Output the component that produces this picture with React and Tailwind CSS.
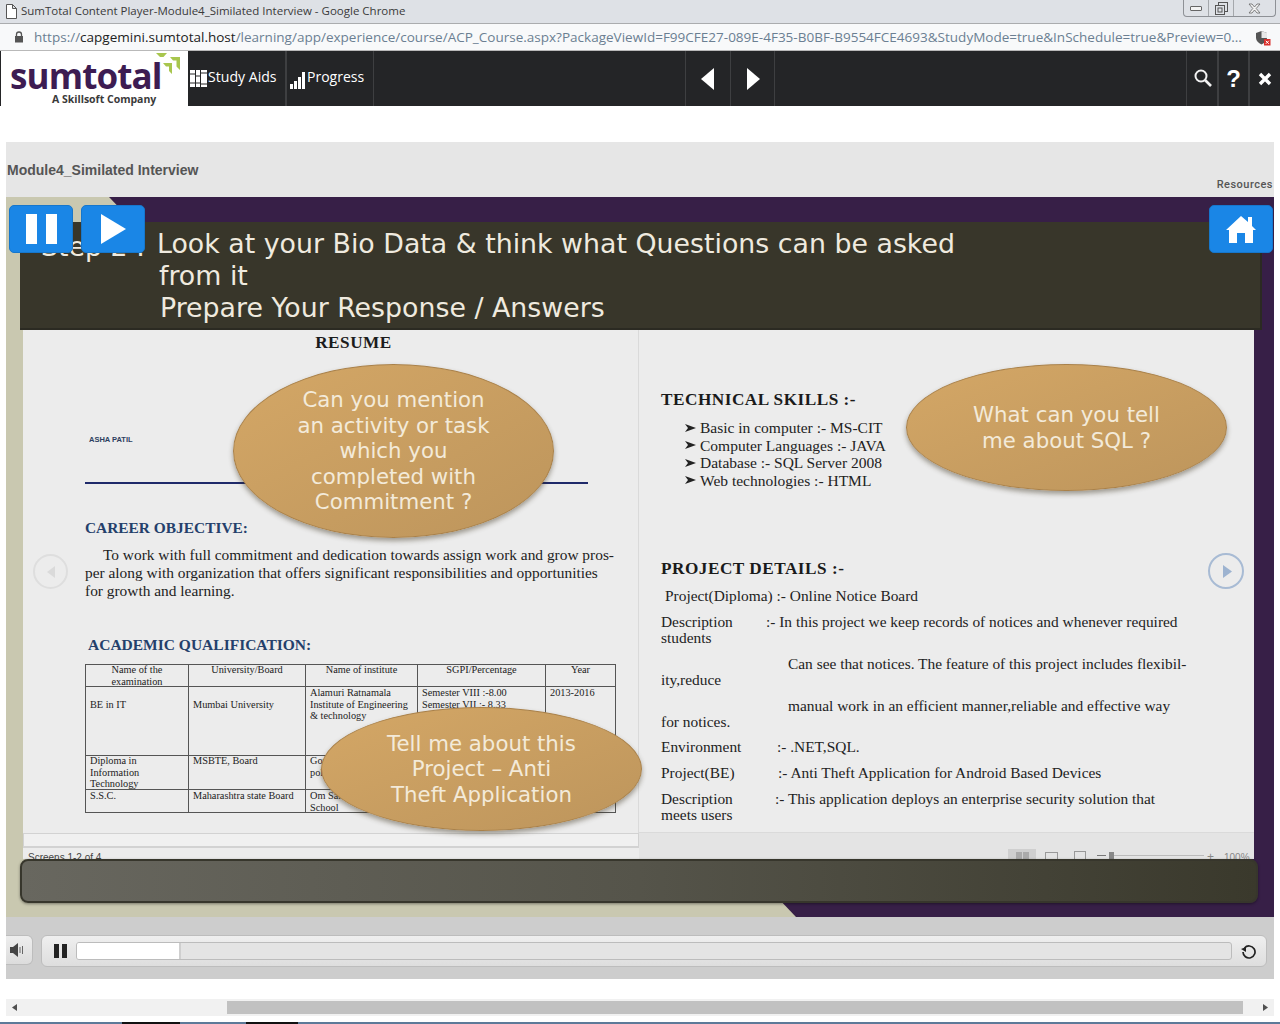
const serif = "font-['Liberation_Serif',serif]";

function Ellipse({ className, lines, textClass }) {
  return (
    <div className={`absolute rounded-[50%] border border-[#a9814a] bg-gradient-to-br from-[#d4a766] to-[#bd955c] shadow-[0_3px_5px_rgba(60,50,30,0.45)] flex flex-col items-center justify-center text-[#f3ead9] font-['DejaVu_Sans',sans-serif] text-center ${className}`}>
      {lines.map((l) => (
        <div key={l} className={textClass}>{l}</div>
      ))}
    </div>
  );
}

function BlueBtn({ className, children }) {
  return (
    <div className={`absolute top-[8px] w-[64px] h-[48px] rounded-[5px] bg-[#1a86e6] border border-[#1677cc] flex items-center justify-center ${className}`}>
      {children}
    </div>
  );
}

function Cell({ className = "", children }) {
  return <div className={`border-r border-b border-[#555] px-[4px] leading-[11.5px] text-[10.3px] text-[#222] overflow-hidden ${className}`}>{children}</div>;
}

function Row({ top = 0, h = 16, children }) {
  return <div className="flex whitespace-nowrap" style={{ marginTop: top, height: h, lineHeight: `${h}px` }}>{children}</div>;
}

export default function App() {
  return (
    <div className="w-[1280px] h-[1024px] overflow-hidden bg-white relative font-['Liberation_Sans',sans-serif]">
      {/* title bar */}
      <div className="h-[23px] bg-[#dee1e6] flex items-center pl-[5px] relative">
        <svg width="13" height="15" viewBox="0 0 13 15" className="mr-[3px]"><path d="M1.5 .5h6l4 4v10h-10z M7.5 .5v4h4" fill="#fff" stroke="#555" /></svg>
        <span className="text-[11.500px] text-[#3a3a3a] font-['Open_Sans',sans-serif] leading-none -mt-[2px]">SumTotal Content Player-Module4_Similated Interview - Google Chrome</span>
        <div className="absolute left-[1183px] top-0 w-[93px] h-[17px] rounded-b-[4px] border border-t-0 border-[#8e9196] flex">
          <div className="w-[25px] border-r border-[#a5a8ac] flex items-center justify-center"><div className="w-[12px] h-[5px] rounded-[1px] border border-[#666] bg-[#f3f3f3]" /></div>
          <div className="w-[25px] border-r border-[#a5a8ac] flex items-center justify-center">
            <svg width="13" height="13" viewBox="0 0 13 13"><rect x="3.5" y=".5" width="9" height="9" fill="none" stroke="#555" /><rect x=".5" y="3.5" width="9" height="9" fill="#dee1e6" stroke="#555" /><rect x="3" y="6" width="4" height="4" fill="none" stroke="#555" /></svg>
          </div>
          <div className="flex-1 flex items-center justify-center">
            <svg width="13" height="11" viewBox="0 0 13 11"><path d="M1 1h3l2.5 3L9 1h3L8.2 5.5 12 10H9L6.5 7 4 10H1l3.8-4.500z" fill="#f2f2f2" stroke="#666" strokeWidth=".8" /></svg>
          </div>
        </div>
      </div>
      {/* address bar */}
      <div className="h-[28px] bg-[#f8f9fa] border-t border-t-[#aaacae] border-b border-b-[#b9b9b9] flex items-center pl-[14px] relative">
        <svg width="10" height="12" viewBox="0 0 10 12" className="mr-[10px]"><path d="M2.500 5V3.500a2.500 2.500 0 0 1 5 0V5" fill="none" stroke="#555" strokeWidth="1.300" /><rect x="1" y="5" width="8" height="6.500" fill="#555" /></svg>
        <span className="text-[13.520px] font-['Open_Sans',sans-serif] whitespace-nowrap leading-none mt-[1px]">
          <span className="text-[#6b7f92]">https://</span>
          <span className="text-[#222]">capgemini.sumtotal.host</span>
          <span className="text-[#6b7f92]">/learning/app/experience/course/ACP_Course.aspx?PackageViewId=F99CFE27-089E-4F35-B0BF-B9554FCE4693&amp;StudyMode=true&amp;InSchedule=true&amp;Preview=0...</span>
        </span>
        <svg width="16" height="16" viewBox="0 0 16 16" className="absolute left-[1255px] top-[6px]"><path d="M6.500 1 12 3v5c0 3-2.500 5-5.500 6.500C3.500 13 1 11 1 8V3z" fill="#555" /><path d="M6.500 1 12 3v5H6.500z" fill="#e8e8e8" /><rect x="9" y="9" width="6.500" height="6.500" fill="#d9302c" /><path d="M10.800 10.800l3 3m0-3l-3 3" stroke="#fff" /></svg>
      </div>
      {/* nav */}
      <div className="h-[55px] bg-[#242527] flex text-white font-['Open_Sans',sans-serif]">
        <div className="ml-[1px] w-[187px] bg-white relative shrink-0 overflow-hidden">
          <div className="absolute left-[9px] top-[8px] text-[35px] leading-[34px] font-bold text-[#3d1c52] tracking-[-0.025em] font-['Open_Sans',sans-serif]">sumtotal</div>
          <svg width="26" height="22" viewBox="0 0 26 22" className="absolute left-[154px] top-[1px]"><path d="M1 1h11L8.500 5H5zM15 5h10v13l-3.500-3.500V8.500H18zM8 11h9v11l-3-3v-4.500h-3z" fill="#a8c64e" /></svg>
          <div className="absolute left-[51px] top-[42px] text-[10.500px] leading-[12px] font-bold text-[#3a3a3a] whitespace-nowrap">A Skillsoft Company</div>
        </div>
        <div className="w-[99px] border-r-2 border-[#3e3f41] flex items-center pl-[2px] pb-[2px]">
          <svg width="17" height="17" viewBox="0 0 17 17" className="mt-[2px]"><path d="M0 0h5v17H0zM6 0h4v17H6zM11 0h6v17h-6z" fill="#fff" /><path d="M0 4h5M0 13h5M6 6h4M6 13h4M11 3h6M11 14h6" stroke="#242527" /></svg>
          <span className="ml-[1px] text-[14.100px] leading-none">Study Aids</span>
        </div>
        <div className="w-[87px] border-r border-[#3e3f41] flex items-center pl-[3px] pb-[3px]">
          <svg width="15" height="17" viewBox="0 0 15 17" className="mt-[6px]"><path d="M0 12h3v5H0zM4 9h3v8H4zM8 5h3v12H8zM12 0h3v17h-3z" fill="#fff" /></svg>
          <span className="ml-[2px] text-[14px] leading-none">Progress</span>
        </div>
        <div className="w-[311px]" />
        <div className="w-[45px] border-l border-[#3e3f41] flex items-center justify-center">
          <svg width="14" height="22" viewBox="0 0 14 22"><path d="M13 0v22L0 11z" fill="#fff" /></svg>
        </div>
        <div className="w-[45px] border-l border-r border-[#3e3f41] flex items-center justify-center">
          <svg width="14" height="22" viewBox="0 0 14 22"><path d="M1 0v22l13-11z" fill="#fff" /></svg>
        </div>
        <div className="w-[411px]" />
        <div className="w-[31px] border-l border-[#3e3f41] flex items-center justify-center pl-[2px] pb-[2px]">
          <svg width="18" height="18" viewBox="0 0 18 18"><circle cx="7" cy="7" r="5.500" fill="none" stroke="#f2f2f2" strokeWidth="2" /><path d="M11 11l6 6" stroke="#f2f2f2" strokeWidth="2.600" /></svg>
        </div>
        <div className="w-[31px] border-l-2 border-[#3e3f41] flex items-center justify-center text-[24px] font-bold leading-none font-['Liberation_Sans',sans-serif]">?</div>
        <div className="flex-1 border-l-2 border-[#3e3f41] flex items-center justify-center">
          <svg width="14" height="14" viewBox="0 0 14 14"><path d="M2 2l10 10M12 2L2 12" stroke="#fff" strokeWidth="3.400" /></svg>
        </div>
      </div>

      {/* player */}
      <div className="mt-[36px] mx-[6px] bg-[#e6e6e6]">
        <div className="h-[55px] relative text-[#555]">
          <div className="absolute left-[1px] top-[20px] text-[14px] leading-[16px] font-bold font-['Liberation_Sans',sans-serif]">Module4_Similated Interview</div>
          <div className="absolute right-[1px] top-[36px] text-[11px] leading-[13px] font-medium tracking-[0.045em] font-['Roboto',sans-serif]">Resources</div>
        </div>
        {/* slide */}
        <div className="h-[720px] bg-[#c9c8b0] relative overflow-hidden">
          <div className="absolute inset-0 bg-[#371f47] [clip-path:polygon(103px_0,100%_0,100%_100%,790px_100%)]" />
          {/* heading band */}
          <div className="absolute left-[14px] top-[25px] w-[1242px] h-[108px] bg-[#38362a] border-b-2 border-r-2 border-[#2b2a22] text-[#efeadf] font-['DejaVu_Sans',sans-serif] text-[26.800px] leading-[32px] whitespace-nowrap">
            <div className="absolute left-[21px] top-[9px]">Step 2 :</div>
            <div className="absolute left-[137px] top-[6px]">
              <div>Look at your Bio Data &amp; think what Questions can be asked</div>
              <div className="ml-[2px]">from it</div>
              <div className="ml-[3px]">Prepare Your Response / Answers</div>
            </div>
          </div>
          {/* document sheet */}
          <div className={`absolute left-[17px] top-[133px] w-[1231px] h-[529px] bg-[#ececec] flex text-[#1c1c1c] ${serif}`}>
            <div className="w-[616px] h-[503px] border-r border-[#dadada] pl-[62px] pr-[20px] shrink-0">
              <div className="text-center font-bold text-[17.200px] tracking-[0.03em] leading-[24px] h-[25px] pt-[1px] w-[537px] whitespace-nowrap">RESUME</div>
              <div className="mt-[80px] ml-[4px] font-['Liberation_Sans',sans-serif] font-bold text-[7.500px] leading-[10px] text-[#2d3e60]">ASHA PATIL</div>
              <div className="mt-[37px] h-[2px] w-[503px] bg-[#1f2a6a]" />
              <div className="mt-[35px] font-bold text-[15.400px] leading-[18px] text-[#24406b] whitespace-nowrap">CAREER OBJECTIVE:</div>
              <div className="mt-[9px] text-[15.400px] leading-[18px] w-[535px] text-[#222]">
                <div className="whitespace-nowrap indent-[18px]">To work with full commitment and dedication towards assign work and grow pros-</div>
                <div className="whitespace-nowrap">per along with organization that offers significant responsibilities and opportunities</div>
                <div className="whitespace-nowrap">for growth and learning.</div>
              </div>
              <div className="mt-[36px] ml-[3px] font-bold text-[15.500px] leading-[18px] text-[#24406b] whitespace-nowrap">ACADEMIC QUALIFICATION:</div>
              <div className="mt-[10px] w-[531px] h-[149px] border-t border-l border-[#555] grid grid-cols-[103px_117px_112px_128px_70px] grid-rows-[22px_69px_34px_23px]">
                <Cell className="text-center"><div className="-mt-[1px]">Name of the examination</div></Cell>
                <Cell className="text-center"><div className="-mt-[1px]">University/Board</div></Cell>
                <Cell className="text-center"><div className="-mt-[1px]">Name of institute</div></Cell>
                <Cell className="text-center"><div className="-mt-[1px]">SGPI/Percentage</div></Cell>
                <Cell className="text-center"><div className="-mt-[1px]">Year</div></Cell>
                <Cell className="pt-[12px]">BE in IT</Cell>
                <Cell className="pt-[12px]">Mumbai University</Cell>
                <Cell className="whitespace-nowrap">Alamuri Ratnamala<br />Institute of Engineering<br />&amp; technology</Cell>
                <Cell className="whitespace-nowrap">Semester VIII :-8.00<br />Semester VII :- 8.33</Cell>
                <Cell>2013-2016</Cell>
                <Cell className="whitespace-nowrap"><div className="-mt-[1px]">Diploma in<br />Information<br />Technology</div></Cell>
                <Cell><div className="-mt-[1px]">MSBTE, Board</div></Cell>
                <Cell className="whitespace-nowrap"><div className="-mt-[1px]">Government<br />polytechnic</div></Cell>
                <Cell />
                <Cell />
                <Cell>S.S.C.</Cell>
                <Cell className="whitespace-nowrap">Maharashtra state Board</Cell>
                <Cell className="whitespace-nowrap">Om Sai High<br />School</Cell>
                <Cell />
                <Cell />
              </div>
              <div className="mt-[20px] -ml-[62px] w-[616px] h-[15px] bg-[#f0f0f0] border border-[#d2d2d2] border-b-2" />
              <div className="-ml-[57px] mt-[4px] text-[10px] leading-[12px] text-[#444] font-['Liberation_Sans',sans-serif] whitespace-nowrap">Screens 1-2 of 4</div>
            </div>
            <div className="flex-1 pl-[22px] text-[15.400px] text-[#222] relative">
              <div className="mt-[60px] font-bold text-[17.200px] tracking-[0.03em] leading-[20px] text-[#1a1a1a] whitespace-nowrap">TECHNICAL SKILLS :-</div>
              <div className="mt-[9px] ml-[24px] text-[15.500px] leading-[17.500px] whitespace-nowrap">
                {["Basic in computer :- MS-CIT", "Computer Languages :- JAVA", "Database :- SQL Server 2008", "Web technologies :- HTML"].map((s) => (
                  <div key={s} className="flex items-center">
                    <svg width="11" height="10" viewBox="0 0 11 10" className="mr-[4px]"><path d="M0 1l11 4L0 9l3-4z" fill="#222" /></svg>{s}
                  </div>
                ))}
              </div>
              <div className="mt-[70px] font-bold text-[17.200px] tracking-[0.03em] leading-[20px] text-[#1a1a1a] whitespace-nowrap">PROJECT DETAILS :-</div>
              <Row top={9}><span className="ml-[4px]">Project(Diploma) :- Online Notice Board</span></Row>
              <Row top={10}><span className="w-[105px]">Description</span><span>:- In this project we keep records of notices and whenever required</span></Row>
              <Row>students</Row>
              <Row top={10}><span className="ml-[127px]">Can see that notices. The feature of this project includes flexibil-</span></Row>
              <Row>ity,reduce</Row>
              <Row top={10}><span className="ml-[127px]">manual work in an efficient manner,reliable and effective way</span></Row>
              <Row>for notices.</Row>
              <Row top={9}><span className="w-[116px]">Environment</span><span>:- .NET,SQL.</span></Row>
              <Row top={10}><span className="w-[117px]">Project(BE)</span><span>:- Anti Theft Application for Android Based Devices</span></Row>
              <Row top={10}><span className="w-[114px]">Description</span><span>:- This application deploys an enterprise security solution that</span></Row>
              <Row>meets users</Row>
              <div className="absolute left-0 right-0 top-[502px] h-[27px] bg-[#e4e4e4] border-t border-[#dadada] font-['Liberation_Sans',sans-serif] text-[#888]">
                <div className="absolute left-[369px] top-[16px] w-[28px] h-[11px] bg-[#cfcfcf] flex justify-center gap-[1px] pt-[3px]"><span className="w-[6px] h-[8px] bg-[#aaa]" /><span className="w-[6px] h-[8px] bg-[#aaa]" /></div>
                <div className="absolute left-[406px] top-[19px] w-[13px] h-[8px] border border-[#999]" />
                <div className="absolute left-[435px] top-[18px] w-[12px] h-[9px] border border-[#999]" />
                <div className="absolute left-[458px] top-[22px] w-[9px] h-[1px] bg-[#777]" />
                <div className="absolute left-[470px] top-[19px] w-[5px] h-[8px] bg-[#888]" />
                <div className="absolute left-[475px] top-[22px] w-[90px] h-[1px] bg-[#bbb]" />
                <div className="absolute left-[568px] top-[17px] text-[12px] leading-[14px]">+</div>
                <div className="absolute left-[585px] top-[19px] text-[10px] leading-[12px]">100%</div>
              </div>
            </div>
          </div>
          {/* round arrows */}
          <div className="absolute left-[27px] top-[357px] w-[35px] h-[35px] rounded-full border-2 border-[#dedede] flex items-center justify-center">
            <svg width="8" height="12" viewBox="0 0 8 12"><path d="M8 0v12L0 6z" fill="#dadada" /></svg>
          </div>
          <div className="absolute left-[1202px] top-[356px] w-[36px] h-[36px] rounded-full border-2 border-[#a8bbd4] flex items-center justify-center pl-[2px]">
            <svg width="9" height="13" viewBox="0 0 9 13"><path d="M0 0v13l9-6.500z" fill="#9db3d0" /></svg>
          </div>
          {/* callouts */}
          <Ellipse className="left-[227px] top-[167px] w-[321px] h-[174px]" textClass="text-[21.300px] leading-[25.500px]" lines={["Can you mention", "an activity or task", "which you", "completed with", "Commitment ?"]} />
          <Ellipse className="left-[900px] top-[167px] w-[321px] h-[127px]" textClass="text-[21.300px] leading-[25.500px]" lines={["What can you tell", "me about SQL ?"]} />
          <Ellipse className="left-[315px] top-[510px] w-[321px] h-[124px]" textClass="text-[21.300px] leading-[25.500px]" lines={["Tell me about this", "Project – Anti", "Theft Application"]} />
          {/* bottom band */}
          <div className="absolute left-[14px] top-[662px] w-[1238px] h-[44px] rounded-[8px] border-2 border-[#37362c] bg-gradient-to-r from-[#68675f] via-[#55544a] to-[#3a392c] shadow-[0_1px_3px_rgba(0,0,0,0.4)]" />
          {/* blue buttons */}
          <BlueBtn className="left-[3px]">
            <div className="flex gap-[9px]"><div className="w-[11px] h-[30px] bg-white" /><div className="w-[11px] h-[30px] bg-white" /></div>
          </BlueBtn>
          <BlueBtn className="left-[75px]">
            <svg width="26" height="30" viewBox="0 0 26 30"><path d="M1 0v30l25-15z" fill="#fff" /></svg>
          </BlueBtn>
          <BlueBtn className="left-[1203px]">
            <svg width="30" height="27" viewBox="0 0 30 27"><path d="M15 0l7 6V1h4v9l4 4h-3v13h-8V17h-8v10H3V14H0z" fill="#fff" /></svg>
          </BlueBtn>
        </div>
        {/* media controls */}
        <div className="h-[62px] bg-[#cdcdcd] flex pt-[18px]">
          <div className="w-[27px] h-[30px] rounded-r-[6px] border border-l-0 border-[#bdbdbd] bg-gradient-to-b from-[#eeeeee] to-[#dcdcdc] flex items-center pl-[4px]">
            <svg width="14" height="14" viewBox="0 0 14 14"><path d="M0 4h3l5-4v14l-5-4H0z" fill="#444" /><path d="M10 4v6M12.500 3v8" stroke="#666" /></svg>
          </div>
          <div className="ml-[8px] w-[1226px] h-[32px] rounded-[6px] border border-[#bdbdbd] bg-gradient-to-b from-[#efefef] to-[#dedede] flex items-center">
            <div className="ml-[12px] flex gap-[3px]"><div className="w-[5px] h-[14px] bg-[#222]" /><div className="w-[5px] h-[14px] bg-[#222]" /></div>
            <div className="ml-[9px] w-[1156px] h-[18px] rounded-[3px] border border-[#bcbcbc] bg-[#e4e4e4] overflow-hidden">
              <div className="w-[104px] h-full bg-white border-r-2 border-[#cfcfcf]" />
            </div>
            <svg width="16" height="16" viewBox="0 0 16 16" className="ml-[9px]"><path d="M3.500 5A6 6 0 1 1 2 9" fill="none" stroke="#222" strokeWidth="1.700" /><path d="M0 6l5-2v5z" fill="#222" /></svg>
          </div>
        </div>
      </div>
      {/* scrollbar */}
      <div className="mt-[20px] mx-[6px] h-[17px] bg-[#f1f1f1] flex items-center">
        <svg width="5" height="7" viewBox="0 0 5 7" className="ml-[6px]"><path d="M5 0v7L0 3.500z" fill="#505050" /></svg>
        <div className="ml-[210px] w-[1016px] h-[13px] bg-[#c1c1c1]" />
        <svg width="5" height="7" viewBox="0 0 5 7" className="ml-[20px]"><path d="M0 0v7l5-3.500z" fill="#505050" /></svg>
      </div>
      {/* taskbar edge */}
      <div className="mt-[6px] h-[2px] bg-[#5d7a99] flex">
        <div className="ml-[122px] w-[58px] bg-[#111]" />
        <div className="ml-[66px] w-[52px] bg-[#111]" />
      </div>
    </div>
  );
}
